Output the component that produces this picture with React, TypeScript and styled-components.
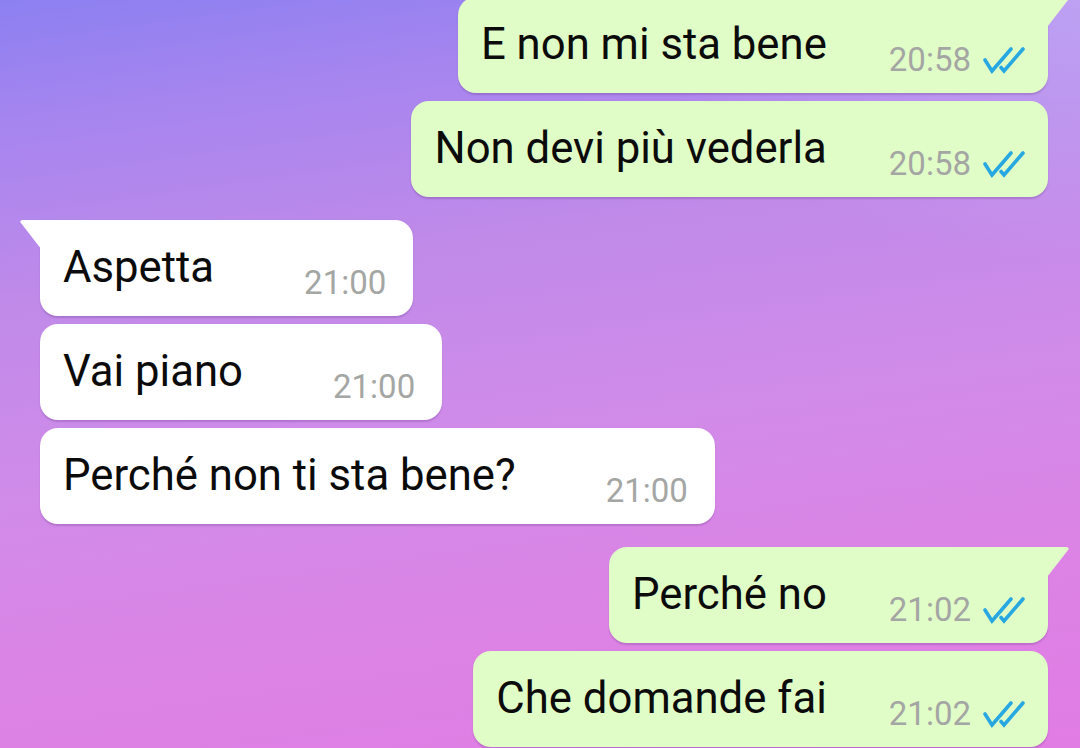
import React from 'react'
import styled, { createGlobalStyle, css } from 'styled-components'

const GlobalStyle = createGlobalStyle`
  html, body {
    margin: 0;
    padding: 0;
    height: 100%;
    overflow: hidden;
  }

  body {
    font-family: Roboto, 'Liberation Sans', sans-serif;
  }
`

const ChatWrapper = styled.div`
  width: 1080px;
  height: 748px;
  overflow: hidden;
  box-sizing: border-box;
  padding: 0 32px 0 40px;
  display: flex;
  flex-direction: column;
  background:
    radial-gradient(ellipse 420px 260px at 100% 0%, rgba(196, 170, 244, 0.75), rgba(196, 170, 244, 0) 100%),
    linear-gradient(172deg, #8c80f1 0%, #a685ef 14%, #c08ae9 34%, #d08be9 55%, #db84e5 76%, #e17ce4 100%);
`

const Group = styled.div<{ $out?: boolean }>`
  display: flex;
  flex-direction: column;
  align-items: ${p => (p.$out ? 'flex-end' : 'flex-start')};
  gap: 8px;

  & + & {
    margin-top: 23px;
  }

  &:first-child {
    margin-top: -3px;
  }
`

const Bubble = styled.div<{ $out?: boolean; $tail?: boolean }>`
  position: relative;
  display: flex;
  align-items: flex-start;
  gap: ${p => (p.$out ? '62px' : '90px')};
  padding: 22px ${p => (p.$out ? '23px' : '27px')} 14px 23px;
  border-radius: 18px;
  background: ${p => (p.$out ? '#e1fdc7' : '#ffffff')};
  box-shadow: 0 1.5px 1.5px rgba(80, 40, 110, 0.22);

  ${p =>
    p.$tail &&
    css`
      border-top-${p.$out ? 'right' : 'left'}-radius: 0;

      &::before {
        content: '';
        position: absolute;
        top: 0;
        ${p.$out ? 'right: -21px;' : 'left: -20px;'}
        width: 22px;
        height: 29px;
        background: ${p.$out ? '#e1fdc7' : '#ffffff'};
        clip-path: ${p.$out
          ? 'polygon(0 0, 92% 0, 100% 6%, 4% 100%, 0 100%)'
          : 'polygon(8% 0, 100% 0, 100% 100%, 96% 100%, 0 6%)'};
      }
    `}
`

const Text = styled.div`
  font-size: 43.7px;
  line-height: 50px;
  color: #0b0b0b;
  white-space: nowrap;
`

const Meta = styled.div`
  display: flex;
  align-items: center;
  gap: 12px;
  margin-top: 22px;
  font-size: 33px;
  line-height: 38px;
  color: #a4a6a4;
  white-space: nowrap;
`

const Ticks = styled.svg`
  display: block;
`

const DoubleTick: React.FC = () => (
  <Ticks width="42" height="28" viewBox="0 0 42 28">
    <g fill="none" stroke="#27a8e0" strokeWidth="3.6" strokeLinecap="round" strokeLinejoin="miter">
      <path d="M2 14 L9 25 L28 3" />
      <path d="M18 21.5 L21 25 L40 3" />
    </g>
  </Ticks>
)

interface Message {
  text: string
  time: string
}

interface GroupProps {
  out?: boolean
  messages: Message[]
}

const MessageGroup: React.FC<GroupProps> = ({ out, messages }) => (
  <Group $out={out}>
    {messages.map((m, i) => (
      <Bubble key={i} $out={out} $tail={i === 0}>
        <Text>{m.text}</Text>
        <Meta>
          <span>{m.time}</span>
          {out && <DoubleTick />}
        </Meta>
      </Bubble>
    ))}
  </Group>
)

const App: React.FC = () => (
  <>
    <GlobalStyle />
    <ChatWrapper>
      <MessageGroup
        out
        messages={[
          { text: 'E non mi sta bene', time: '20:58' },
          { text: 'Non devi più vederla', time: '20:58' },
        ]}
      />
      <MessageGroup
        messages={[
          { text: 'Aspetta', time: '21:00' },
          { text: 'Vai piano', time: '21:00' },
          { text: 'Perché non ti sta bene?', time: '21:00' },
        ]}
      />
      <MessageGroup
        out
        messages={[
          { text: 'Perché no', time: '21:02' },
          { text: 'Che domande fai', time: '21:02' },
        ]}
      />
    </ChatWrapper>
  </>
)

export default App
